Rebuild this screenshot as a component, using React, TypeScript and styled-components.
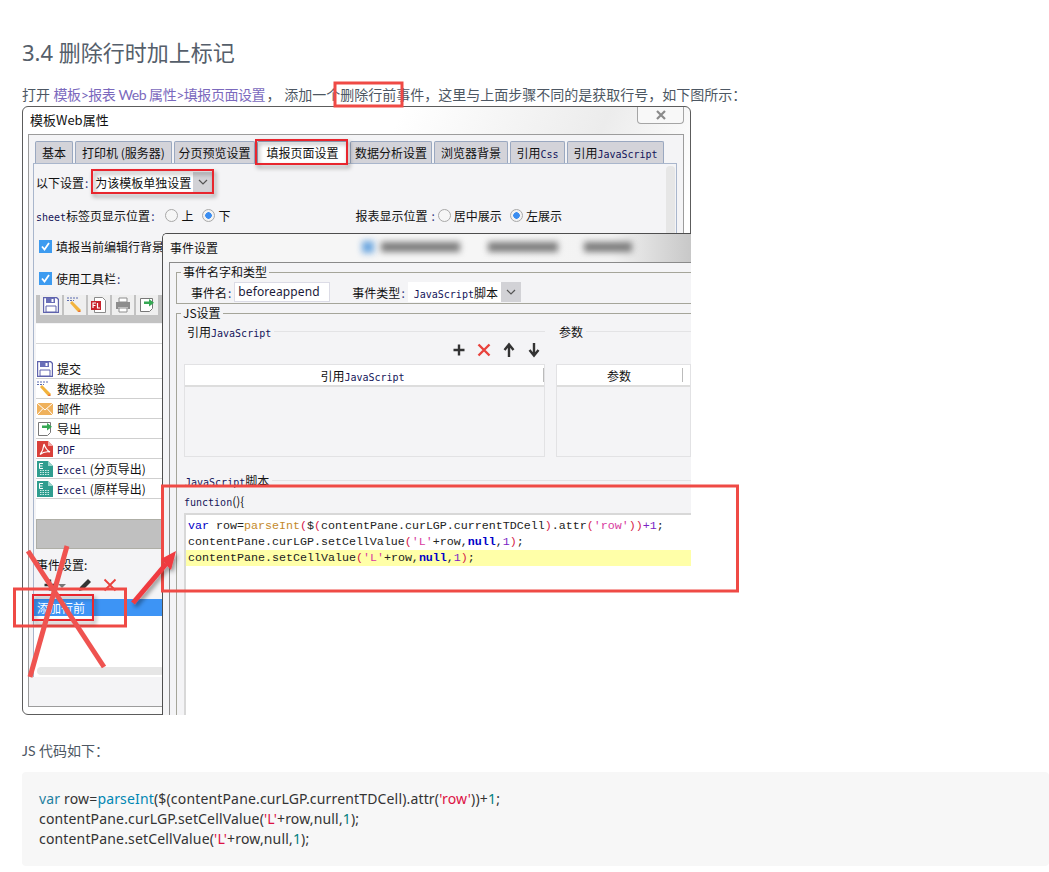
import React from "react";
import styled, { createGlobalStyle } from "styled-components";

const Global = createGlobalStyle`
  html, body { margin: 0; padding: 0; background: #fff; overflow: hidden; }
  #root { width: 1049px; height: 872px; overflow: hidden; }
  * { box-sizing: border-box; }
`;

const Article = styled.main`
  padding: 37px 0 0 22px;
  font-family: "Noto Sans", "Noto Sans CJK SC", sans-serif;
  color: #4d5763;
`;
const Heading = styled.h2`
  margin: 0;
  font-size: 22px;
  line-height: 30px;
  font-weight: 400;
  color: #555e6a;
`;
const Para = styled.p`
  margin: 18px 0 0;
  font-family: "Lato", "Noto Sans CJK SC", sans-serif;
  font-size: 14px;
  line-height: 20px;
  white-space: nowrap;
`;
const Link = styled.a`
  color: #7b69bd;
  letter-spacing: -0.47px;
  margin-right: -2px;
`;
const Figure = styled.figure`
  position: relative;
  margin: 1px 0 0;
  width: 669px;
  height: 609px;
  font-family: "Noto Sans CJK SC", sans-serif;
  font-size: 12px;
  color: #111;
`;
const Window = styled.div`
  width: 669px;
  height: 609px;
  border: 1px solid #5c5c5c;
  border-radius: 6px;
  overflow: hidden;
  background: linear-gradient(115deg, #fff 40%, #ececec 62%, #fff 75%);
`;
const TitleBar = styled.div`
  height: 27px;
  display: flex;
  justify-content: space-between;
  padding: 3px 6px 0 7px;
  font-size: 13px;
  line-height: 19px;
  align-items: flex-start;
`;
const CloseButton = styled.div`
  width: 47px;
  height: 17px;
  margin-top: -3px;
  border: 1px solid #a5a5a5;
  border-top: none;
  border-radius: 0 0 4px 4px;
  background: #f8f8f8;
  display: flex;
  align-items: center;
  justify-content: center;
`;
const Panel = styled.div`
  height: 573px;
  margin: 0 6px 0 5px;
  padding: 6px 6px 0 4px;
  border: 1px solid #9c9c9c;
  background: #f4f4f6;
`;
const TabRow = styled.div`
  display: flex;
  gap: 2px;
  height: 22px;
  padding-left: 2px;
`;
const Tab = styled.div<{ $w: number; $active?: boolean }>`
  width: ${(p) => p.$w}px;
  height: 22px;
  border: 1px solid #9aa8c0;
  border-bottom: none;
  border-radius: 2px 2px 0 0;
  background: ${(p) => (p.$active ? "#fff" : "#d3d3d9")};
  text-align: center;
  line-height: 21px;
  white-space: nowrap;
`;
const Mono = styled.span`
  font-family: "DejaVu Sans Mono", monospace;
  font-size: 10px;
  color: #14145a;
`;
const Pane = styled.div`
  position: relative;
  height: 514px;
  border: 1px solid #a9b6cc;
  background: #f4f4f6;
`;
const PaneScroll = styled.div`
  position: absolute;
  top: 2px;
  right: 1px;
  width: 9px;
  height: 300px;
  background: #e6e6e6;
  border-radius: 4px;
`;
const Row = styled.div<{ $mt: number }>`
  display: flex;
  align-items: center;
  height: 20px;
  margin-top: ${(p) => p.$mt}px;
  padding-left: 2px;
  white-space: nowrap;
`;
const Colon = styled.span`
  margin: 0 3px 0 1px;
  color: #33337a;
`;
const SelectBox = styled.div<{ $w: number; $ml?: number; $pl?: number }>`
  display: flex;
  align-items: center;
  width: ${(p) => p.$w}px;
  height: 20px;
  margin-left: ${(p) => p.$ml ?? 0}px;
  background: #fff;
  padding-left: ${(p) => p.$pl ?? 2}px;
  position: relative;
  font-size: 12px;
  white-space: nowrap;
`;
const SelectArrow = styled.span<{ $w: number }>`
  position: absolute;
  top: 0;
  right: 0;
  width: ${(p) => p.$w}px;
  height: 20px;
  background: #d2d2d6;
  display: flex;
  align-items: center;
  justify-content: center;
`;
const Radio = styled.span<{ $on?: boolean }>`
  width: 13px;
  height: 13px;
  border-radius: 50%;
  border: 1px solid #a8a8a8;
  background: ${(p) =>
    p.$on ? "radial-gradient(circle, #3b8df0 0 3px, #f2f2f2 3.5px)" : "#f6f6f6"};
  flex: none;
`;
const RadioGroup = styled.div<{ $ml: number }>`
  display: flex;
  align-items: center;
  gap: 3px;
  margin-left: ${(p) => p.$ml}px;
`;
const Check = styled.span`
  width: 13px;
  height: 13px;
  background: #3d9bf0;
  margin: 0 4px 0 3px;
  flex: none;
  display: flex;
  align-items: center;
  justify-content: center;
`;
const LeftColumn = styled.div`
  width: 128px;
  margin-left: 2px;
`;
const Toolbar = styled.div`
  display: flex;
  gap: 2px;
  height: 28px;
  margin-top: 7px;
  padding-left: 4px;
  background: #c2c2c2;
`;
const ToolButton = styled.div`
  width: 22px;
  height: 20px;
  background: #efefef;
  display: flex;
  align-items: center;
  justify-content: center;
`;
const BlankField = styled.div`
  height: 35px;
  margin-top: 1px;
  background: linear-gradient(#fff 0 19px, #d8d8d8 19px 20px, #fff 20px);
`;
const ListRow = styled.div`
  display: flex;
  align-items: center;
  gap: 4px;
  height: 20px;
  padding-left: 1px;
  background: #fff;
  border-bottom: 1px solid #cfcfcf;
  white-space: nowrap;
`;
const ListBlank = styled.div`
  height: 20px;
  background: #fff;
`;
const GrayBlock = styled.div`
  height: 30px;
  background: #c0c0c0;
  border: 1px solid #aeaea6;
`;
const EventLabel = styled.div`
  height: 16px;
  margin-top: 8px;
  line-height: 16px;
`;
const EventTools = styled.div`
  display: flex;
  align-items: center;
  height: 20px;
  margin-top: 2px;
  padding-left: 6px;
`;
const EventTool = styled.span<{ $ml: number }>`
  display: flex;
  margin-left: ${(p) => p.$ml}px;
`;
const EventList = styled.div`
  margin: 4px 0 0 -2px;
  height: 78px;
  width: 130px;
  background: #fff;
`;
const SelectedRow = styled.div`
  height: 17px;
  line-height: 17px;
  padding-left: 3px;
  color: #fff;
  background: #3d94f5;
`;
const HScroll = styled.div`
  height: 8px;
  margin: 51px 0 0 3px;
  background: #e6e6e6;
  border-radius: 4px;
`;
const Dialog = styled.div`
  position: absolute;
  left: 140px;
  top: 127px;
  width: 529px;
  height: 482px;
  overflow: hidden;
  border-left: 1px solid #4e4e4e;
  border-top: 1px solid #4e4e4e;
  border-radius: 5px 0 0 0;
  background: #f4f4f6;
`;
const DialogTitle = styled.div`
  display: flex;
  align-items: center;
  height: 28px;
  padding: 0 0 2px 7px;
  font-size: 12px;
  background: linear-gradient(90deg, #f6f6f6 60%, #f2f2f2 85%, #c8c8c8 100%);
`;
const BlurBlock = styled.span<{ $ml: number; $w: number; $blue?: boolean }>`
  width: ${(p) => p.$w}px;
  height: ${(p) => (p.$blue ? 12 : 10)}px;
  margin-left: ${(p) => p.$ml}px;
  background: ${(p) => (p.$blue ? "#6fa8e0" : "#7c7c7c")};
  filter: blur(3px);
`;
const DialogBody = styled.div`
  width: 640px;
  height: 460px;
  margin-left: 6px;
  padding: 1px 0 0 6px;
  border: 1px solid #8a8a8a;
`;
const Group = styled.fieldset<{ $mt: number }>`
  margin: ${(p) => p.$mt}px 0 0;
  padding: 0;
  border: 1px solid #a5a59a;
  min-width: 0;
`;
const GroupLegend = styled.legend`
  margin-left: 4px;
  padding: 0 2px;
  height: 16px;
  line-height: 16px;
  font-size: 12px;
`;
const EventFields = styled.div`
  display: flex;
  align-items: center;
  height: 20px;
  margin: 2px 0 1px;
  padding-left: 14px;
  white-space: nowrap;
`;
const NameInput = styled.div`
  width: 96px;
  height: 20px;
  background: #fff;
  border: 1px solid #dcdce6;
  padding-left: 3px;
  font-family: "Noto Sans", sans-serif;
  line-height: 17px;
  letter-spacing: 0.1px;
  color: #1a1a3a;
`;
const FieldLabelGap = styled.span`
  margin-left: 22px;
`;
const Columns = styled.div`
  display: flex;
  gap: 11px;
  padding-left: 7px;
`;
const Column = styled.div<{ $w: number }>`
  width: ${(p) => p.$w}px;
  flex: none;
`;
const SubHeader = styled.div`
  display: flex;
  align-items: center;
  height: 16px;
  margin-top: 2px;
  gap: 3px;
  white-space: nowrap;
  &::after {
    content: "";
    flex: 1;
    height: 1px;
    background: #e3e3e5;
  }
`;
const SubHeaderInset = styled.span`
  padding-left: 3px;
`;
const Tools = styled.div`
  display: flex;
  justify-content: flex-end;
  gap: 9px;
  height: 16px;
  margin-top: 3px;
  padding-right: 3px;
`;
const DataTable = styled.div`
  height: 93px;
  margin-top: 6px;
  border: 1px solid #e2e2e4;
`;
const TableHead = styled.div<{ $pr: number }>`
  display: flex;
  align-items: center;
  justify-content: center;
  height: 20px;
  padding-right: ${(p) => p.$pr}px;
  background: #fff;
  border-bottom: 2px solid #dddddd;
  position: relative;
  box-sizing: content-box;
`;
const HeadDivider = styled.span<{ $left: number }>`
  position: absolute;
  left: ${(p) => p.$left}px;
  top: 3px;
  width: 1px;
  height: 14px;
  background: #bbb;
`;
const ScriptHeader = styled(SubHeader)`
  margin: 15px 0 0 5px;
`;
const FunctionLine = styled.div`
  height: 16px;
  margin: 5px 0 0 7px;
  line-height: 16px;
`;
const CodeBox = styled.div`
  margin: 4px 0 0 7px;
  height: 220px;
  padding-top: 3px;
  border-top: 2px solid #d8d8d8;
  border-left: 2px solid #d8d8d8;
  background: #fff;
  font-family: "Liberation Mono", monospace;
  font-size: 11.67px;
  color: #222;
`;
const CodeLine = styled.div<{ $hl?: boolean }>`
  height: 16px;
  line-height: 16px;
  padding-left: 2px;
  white-space: pre;
  background: ${(p) => (p.$hl ? "#ffffa8" : "transparent")};
`;
const Kw = styled.span`
  color: #0000c8;
`;
const KwB = styled.b`
  color: #0000c8;
`;
const Fn = styled.span`
  color: #c48a2c;
`;
const Pn = styled.span`
  color: #d6204a;
`;
const St = styled.span`
  color: #d83aa0;
`;
const Nm = styled.span`
  color: #7a22c4;
`;
const Annotations = styled.svg`
  position: absolute;
  left: -22px;
  top: -106px;
  width: 1049px;
  height: 872px;
  pointer-events: none;
`;
const Caption = styled.p`
  margin: 26px 0 0;
  font-family: "Lato", "Noto Sans CJK SC", sans-serif;
  font-size: 14px;
  line-height: 20px;
`;
const CodeBlock = styled.pre`
  margin: 11px 0 0;
  height: 94px;
  padding: 17px;
  border-radius: 4px;
  background: #f7f7f7;
  font-family: "Noto Sans", "Open Sans", sans-serif;
  font-size: 14px;
  letter-spacing: 0.16px;
  line-height: 20px;
  color: #333;
`;
const HlKeyword = styled.span`
  color: #1f7f9f;
`;
const HlBuiltin = styled.span`
  color: #0086b3;
`;
const HlString = styled.span`
  color: #dd1144;
`;
const HlNumber = styled.span`
  color: #008080;
`;

const Chevron = () => (
  <svg width="10" height="6" viewBox="0 0 10 6">
    <path d="M1 1l4 4 4-4" fill="none" stroke="#555" strokeWidth="1.2" />
  </svg>
);
const Tick = () => (
  <svg width="11" height="11" viewBox="0 0 11 11">
    <path d="M2 5.5l2.5 3L9 2" fill="none" stroke="#fff" strokeWidth="1.8" />
  </svg>
);
const Save = () => (
  <svg width="16" height="16" viewBox="0 0 16 16">
    <path d="M.5.5h13l2 2v13H.5z" fill="#fff" stroke="#5f63ad" strokeWidth="1.4" />
    <path d="M3 1h9v5H3z" fill="#6a6fb8" />
    <path d="M8.5 2h2v3h-2z" fill="#fff" />
    <path d="M3 9h10v6H3z" fill="#fff" stroke="#5f63ad" />
  </svg>
);
const Pencil = () => (
  <svg width="16" height="16" viewBox="0 0 16 16">
    <path d="M0 1h12" stroke="#5b6bb0" strokeDasharray="2 1" />
    <path d="M0 3.5h7" stroke="#5b6bb0" strokeDasharray="2 1" />
    <path d="M3 6l2-2 9 9-1 2-2 0z" fill="#f2b33d" />
    <path d="M12 13l2 2-3-.2z" fill="#e5603c" />
  </svg>
);
const FlDoc = () => (
  <svg width="16" height="16" viewBox="0 0 16 16">
    <path d="M3.500.5h8l3 3v12h-11z" fill="#fff" stroke="#8a8a8a" />
    <path d="M0 4h10v9H0z" fill="#c8232c" />
    <path d="M2 11V6h3M2 8.500h2.500M6.500 6v5h2.500" fill="none" stroke="#fff" strokeWidth="1.2" />
  </svg>
);
const Printer = () => (
  <svg width="16" height="16" viewBox="0 0 16 16">
    <path d="M4 1h8v4H4z" fill="#fff" stroke="#8d8d8d" />
    <path d="M1 5h14v7h-2.500V10h-9v2H1z" fill="#8d8d8d" />
    <path d="M4 11h8v4H4z" fill="#fff" stroke="#8d8d8d" />
  </svg>
);
const Export = () => (
  <svg width="16" height="16" viewBox="0 0 16 16">
    <path d="M1.500 1.500h12v10l-3 3h-9z" fill="#fff" stroke="#777" />
    <path d="M5 4.500h5V2l5 3.800-5 3.700V7H5z" fill="#35a853" />
  </svg>
);
const Mail = () => (
  <svg width="16" height="16" viewBox="0 0 16 16">
    <path d="M0 2h16v12H0z" fill="#efb15c" />
    <path d="M0 2l8 7 8-7M0 14l6-6.500M16 14l-6-6.500" fill="none" stroke="#fff" strokeWidth="1" />
  </svg>
);
const Pdf = () => (
  <svg width="16" height="16" viewBox="0 0 16 16">
    <path d="M0 0h11l5 5v11H0z" fill="#d9403a" />
    <path d="M11 0l5 5h-5z" fill="#f0a9a5" />
    <path d="M7 3c1 3 2 6 6 8-3-.5-7 0-10 2.500 2-2.500 3.500-6 4-10.500z" fill="none" stroke="#fff" strokeWidth="1.1" />
  </svg>
);
const Excel = () => (
  <svg width="16" height="16" viewBox="0 0 16 16">
    <path d="M0 0h11l5 5v11H0z" fill="#2f9d8f" />
    <path d="M11 0l5 5h-5z" fill="#9ad4cb" />
    <path d="M6 2.500H2.500v5H6M2.500 5H5.500" fill="none" stroke="#fff" />
    <path d="M3 9.500h10M3 11.500h10M3 13.500h10" stroke="#cdeee8" strokeDasharray="1.500 1" />
  </svg>
);
const Glyph = ({ d, color, w = 2.4 }: { d: string; color: string; w?: number }) => (
  <svg width="16" height="16" viewBox="0 0 16 16">
    <path d={d} fill="none" stroke={color} strokeWidth={w} />
  </svg>
);
const PLUS = "M8 2.500v11M2.500 8h11";
const CROSS = "M2.500 2.500l11 11M13.500 2.500l-11 11";
const UP = "M8 4v11M3.500 8L8 2.500 12.500 8";
const DOWN = "M8 1v11M3.500 8L8 13.500 12.500 8";

const App = () => (
  <>
    <Global />
    <Article>
      <Heading>3.4 删除行时加上标记</Heading>
      <Para>
        打开 <Link>模板&gt;报表 Web 属性&gt;填报页面设置</Link> ， 添加一个删除行前事件，这里与上面步骤不同的是获取行号，如下图所示：
      </Para>
      <Figure>
        <Window>
          <TitleBar>
            <span>模板Web属性</span>
            <CloseButton>
              <svg width="12" height="12" viewBox="0 0 12 12">
                <path d="M2 2l8 8M10 2l-8 8" stroke="#8a8a8a" strokeWidth="2.2" />
              </svg>
            </CloseButton>
          </TitleBar>
          <Panel>
            <TabRow>
              <Tab $w={38}>基本</Tab>
              <Tab $w={97}>打印机 (服务器)</Tab>
              <Tab $w={81}>分页预览设置</Tab>
              <Tab $w={91} $active>填报页面设置</Tab>
              <Tab $w={82}>数据分析设置</Tab>
              <Tab $w={74}>浏览器背景</Tab>
              <Tab $w={55}>引用<Mono>Css</Mono></Tab>
              <Tab $w={97}>引用<Mono>JavaScript</Mono></Tab>
            </TabRow>
            <Pane>
              <PaneScroll />
              <Row $mt={8}>
                以下设置<Colon>:</Colon>
                <SelectBox $w={120} $ml={2} $pl={2}>
                  为该模板单独设置
                  <SelectArrow $w={20}><Chevron /></SelectArrow>
                </SelectBox>
              </Row>
              <Row $mt={13}>
                <span><Mono>sheet</Mono>标签页显示位置</span><Colon>:</Colon>
                <RadioGroup $ml={8}><Radio />上</RadioGroup>
                <RadioGroup $ml={9}><Radio $on />下</RadioGroup>
                <RadioGroup $ml={125}>报表显示位置<Colon>:</Colon></RadioGroup>
                <RadioGroup $ml={0}><Radio />居中展示</RadioGroup>
                <RadioGroup $ml={8}><Radio $on />左展示</RadioGroup>
              </Row>
              <Row $mt={11}><Check><Tick /></Check>填报当前编辑行背景</Row>
              <Row $mt={12}><Check><Tick /></Check>使用工具栏<Colon>:</Colon></Row>
              <LeftColumn>
                <Toolbar>
                  <ToolButton><Save /></ToolButton>
                  <ToolButton><Pencil /></ToolButton>
                  <ToolButton><FlDoc /></ToolButton>
                  <ToolButton><Printer /></ToolButton>
                  <ToolButton><Export /></ToolButton>
                </Toolbar>
                <BlankField />
                <ListRow><Save />提交</ListRow>
                <ListRow><Pencil />数据校验</ListRow>
                <ListRow><Mail />邮件</ListRow>
                <ListRow><Export />导出</ListRow>
                <ListRow><Pdf /><span><Mono>PDF</Mono></span></ListRow>
                <ListRow><Excel /><span><Mono>Excel</Mono> (分页导出)</span></ListRow>
                <ListRow><Excel /><span><Mono>Excel</Mono> (原样导出)</span></ListRow>
                <ListBlank />
                <GrayBlock />
                <EventLabel>事件设置:</EventLabel>
                <EventTools>
                  <Glyph d={PLUS} color="#333" />
                  <EventTool $ml={0}>
                    <svg width="8" height="16" viewBox="0 0 8 16">
                      <path d="M0 7h8l-4 4z" fill="#777" />
                    </svg>
                  </EventTool>
                  <EventTool $ml={11}>
                    <svg width="16" height="16" viewBox="0 0 16 16">
                      <path d="M2 14l1-4 8-8 3 3-8 8z" fill="#333" />
                    </svg>
                  </EventTool>
                  <EventTool $ml={9}>
                    <Glyph d={CROSS} color="#e8423c" w={1.8} />
                  </EventTool>
                </EventTools>
                <EventList>
                  <SelectedRow>添加行前</SelectedRow>
                  <HScroll />
                </EventList>
              </LeftColumn>
            </Pane>
          </Panel>
        </Window>

        <Dialog>
          <DialogTitle>
            事件设置
            <BlurBlock $blue $ml={144} $w={12} />
            <BlurBlock $ml={7} $w={79} />
            <BlurBlock $ml={28} $w={70} />
            <BlurBlock $ml={26} $w={48} />
          </DialogTitle>
          <DialogBody>
            <Group $mt={0}>
              <GroupLegend>事件名字和类型</GroupLegend>
              <EventFields>
                事件名<Colon>:</Colon>
                <NameInput>beforeappend</NameInput>
                <FieldLabelGap>事件类型</FieldLabelGap>
                <Colon>:</Colon>
                <SelectBox $w={113} $pl={6}>
                  <span><Mono>JavaScript</Mono>脚本</span>
                  <SelectArrow $w={20}><Chevron /></SelectArrow>
                </SelectBox>
              </EventFields>
            </Group>
            <Group $mt={1}>
              <GroupLegend>JS设置</GroupLegend>
              <Columns>
                <Column $w={361}>
                  <SubHeader>
                    <SubHeaderInset>引用<Mono>JavaScript</Mono></SubHeaderInset>
                  </SubHeader>
                  <Tools>
                    <Glyph d={PLUS} color="#333" />
                    <Glyph d={CROSS} color="#e8423c" />
                    <Glyph d={UP} color="#333" />
                    <Glyph d={DOWN} color="#333" />
                  </Tools>
                  <DataTable>
                    <TableHead $pr={4}>
                      <span>引用<Mono>JavaScript</Mono></span>
                      <HeadDivider $left={358} />
                    </TableHead>
                  </DataTable>
                </Column>
                <Column $w={135}>
                  <SubHeader>
                    <SubHeaderInset>参数</SubHeaderInset>
                  </SubHeader>
                  <Tools />
                  <DataTable>
                    <TableHead $pr={9}>
                      参数
                      <HeadDivider $left={125} />
                    </TableHead>
                  </DataTable>
                </Column>
              </Columns>
              <ScriptHeader>
                <SubHeaderInset><Mono>JavaScript</Mono>脚本</SubHeaderInset>
              </ScriptHeader>
              <FunctionLine><Mono>function</Mono>(){"{"}</FunctionLine>
              <CodeBox>
                <CodeLine>
                  <Kw>var</Kw> row=<Fn>parseInt</Fn><Pn>(</Pn>$<Pn>(</Pn>contentPane.curLGP.currentTDCell<Pn>)</Pn>.attr<Pn>(</Pn><St>'row'</St><Pn>))</Pn><Nm>+1</Nm>;
                </CodeLine>
                <CodeLine>
                  contentPane.curLGP.setCellValue<Pn>(</Pn><St>'L'</St>+row,<KwB>null</KwB>,<Nm>1</Nm><Pn>)</Pn>;
                </CodeLine>
                <CodeLine $hl>
                  contentPane.setCellValue<Pn>(</Pn><St>'L'</St>+row,<KwB>null</KwB>,<Nm>1</Nm><Pn>)</Pn>;
                </CodeLine>
              </CodeBox>
            </Group>
          </DialogBody>
        </Dialog>

        <Annotations viewBox="0 0 1049 872">
          <defs>
            <filter id="soft" x="-20%" y="-20%" width="150%" height="150%">
              <feDropShadow dx="2" dy="3" stdDeviation="2" floodColor="#000" floodOpacity="0.4" />
            </filter>
          </defs>
          <g fill="none" stroke="#ef4a45" strokeWidth="3">
            <rect x="335" y="83" width="67" height="23" />
            <rect x="162.500" y="486" width="575" height="105" />
            <rect x="14.500" y="589" width="111" height="37" />
          </g>
          <g fill="none" stroke="#e8282e" strokeWidth="2" filter="url(#soft)">
            <rect x="256" y="140" width="91" height="24" />
            <rect x="92" y="170" width="121" height="23" />
            <rect x="33" y="595" width="60" height="25" />
          </g>
          <g stroke="#ef5350" strokeWidth="5">
            <path d="M28 551l76 116" />
            <path d="M67 546L30 677" />
          </g>
          <g filter="url(#soft)">
            <path d="M133 603l33-39" stroke="#ef3a3f" strokeWidth="5" />
            <path d="M176 551l-15 8 10 11z" fill="#ef3a3f" />
          </g>
        </Annotations>
      </Figure>

      <Caption>JS 代码如下：</Caption>
      <CodeBlock>
        <HlKeyword>var</HlKeyword> row=<HlBuiltin>parseInt</HlBuiltin>($(contentPane.curLGP.currentTDCell).attr(<HlString>'row'</HlString>))+<HlNumber>1</HlNumber>;{"\n"}
        contentPane.curLGP.setCellValue(<HlString>'L'</HlString>+row,null,<HlNumber>1</HlNumber>);{"\n"}
        contentPane.setCellValue(<HlString>'L'</HlString>+row,null,<HlNumber>1</HlNumber>);
      </CodeBlock>
    </Article>
  </>
);

export default App;
